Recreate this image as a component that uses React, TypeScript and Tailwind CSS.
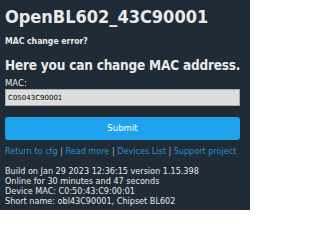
const bold = "font-['DejaVu_Sans_Condensed','Liberation_Sans',sans-serif] font-bold";

export default function App() {
    return (
        <div className="w-[250px] h-[210px] overflow-hidden bg-[#1f2b36] text-[#eaeaea] px-[5px] pt-[6px] font-['Verdana','DejaVu_Sans',sans-serif]">
            <h1 className={`${bold} text-[18px] leading-[21px]`}>OpenBL602_43C90001</h1>
            <h5 className={`${bold} mt-[8px] text-[8.6px] leading-[12px]`}>MAC change error?</h5>
            <h3 className={`${bold} mt-[9px] text-[13.5px] leading-[18px] tracking-[-0.2px] whitespace-nowrap`}>
                Here you can change MAC address.
            </h3>
            <form className="mt-[4px]">
                <label className="block text-[8.5px] leading-[10px]">MAC:</label>
                <input
                    defaultValue="C05043C90001"
                    className="mt-[1px] block w-[235px] h-[17px] px-[2px] bg-[#dddddd] text-[#000] text-[7px] border border-[#aaa] outline-none"
                />
                <button
                    type="button"
                    className="mt-[11px] block w-[235px] h-[23px] rounded-[3px] bg-[#1fa3ec] text-white text-[9.5px] font-['DejaVu_Sans_Condensed','Liberation_Sans',sans-serif]"
                >
                    Submit
                </button>
            </form>
            <div className="mt-[6px] text-[8.1px] leading-[11px] text-[#a9b6c0] whitespace-nowrap">
                <a className="text-[#2a8fd0]">Return to cfg</a> | <a className="text-[#2a8fd0]">Read more</a> |{" "}
                <a className="text-[#2a8fd0]">Devices List</a> | <a className="text-[#2a8fd0]">Support project</a>
            </div>
            <div className="mt-[9px] text-[8.1px] leading-[10px] whitespace-nowrap">
                <div>Build on Jan 29 2023 12:36:15 version 1.15.398</div>
                <div>Online for 30 minutes and 47 seconds</div>
                <div>Device MAC: C0:50:43:C9:00:01</div>
                <div>Short name: obl43C90001, Chipset BL602</div>
            </div>
        </div>
    );
}
